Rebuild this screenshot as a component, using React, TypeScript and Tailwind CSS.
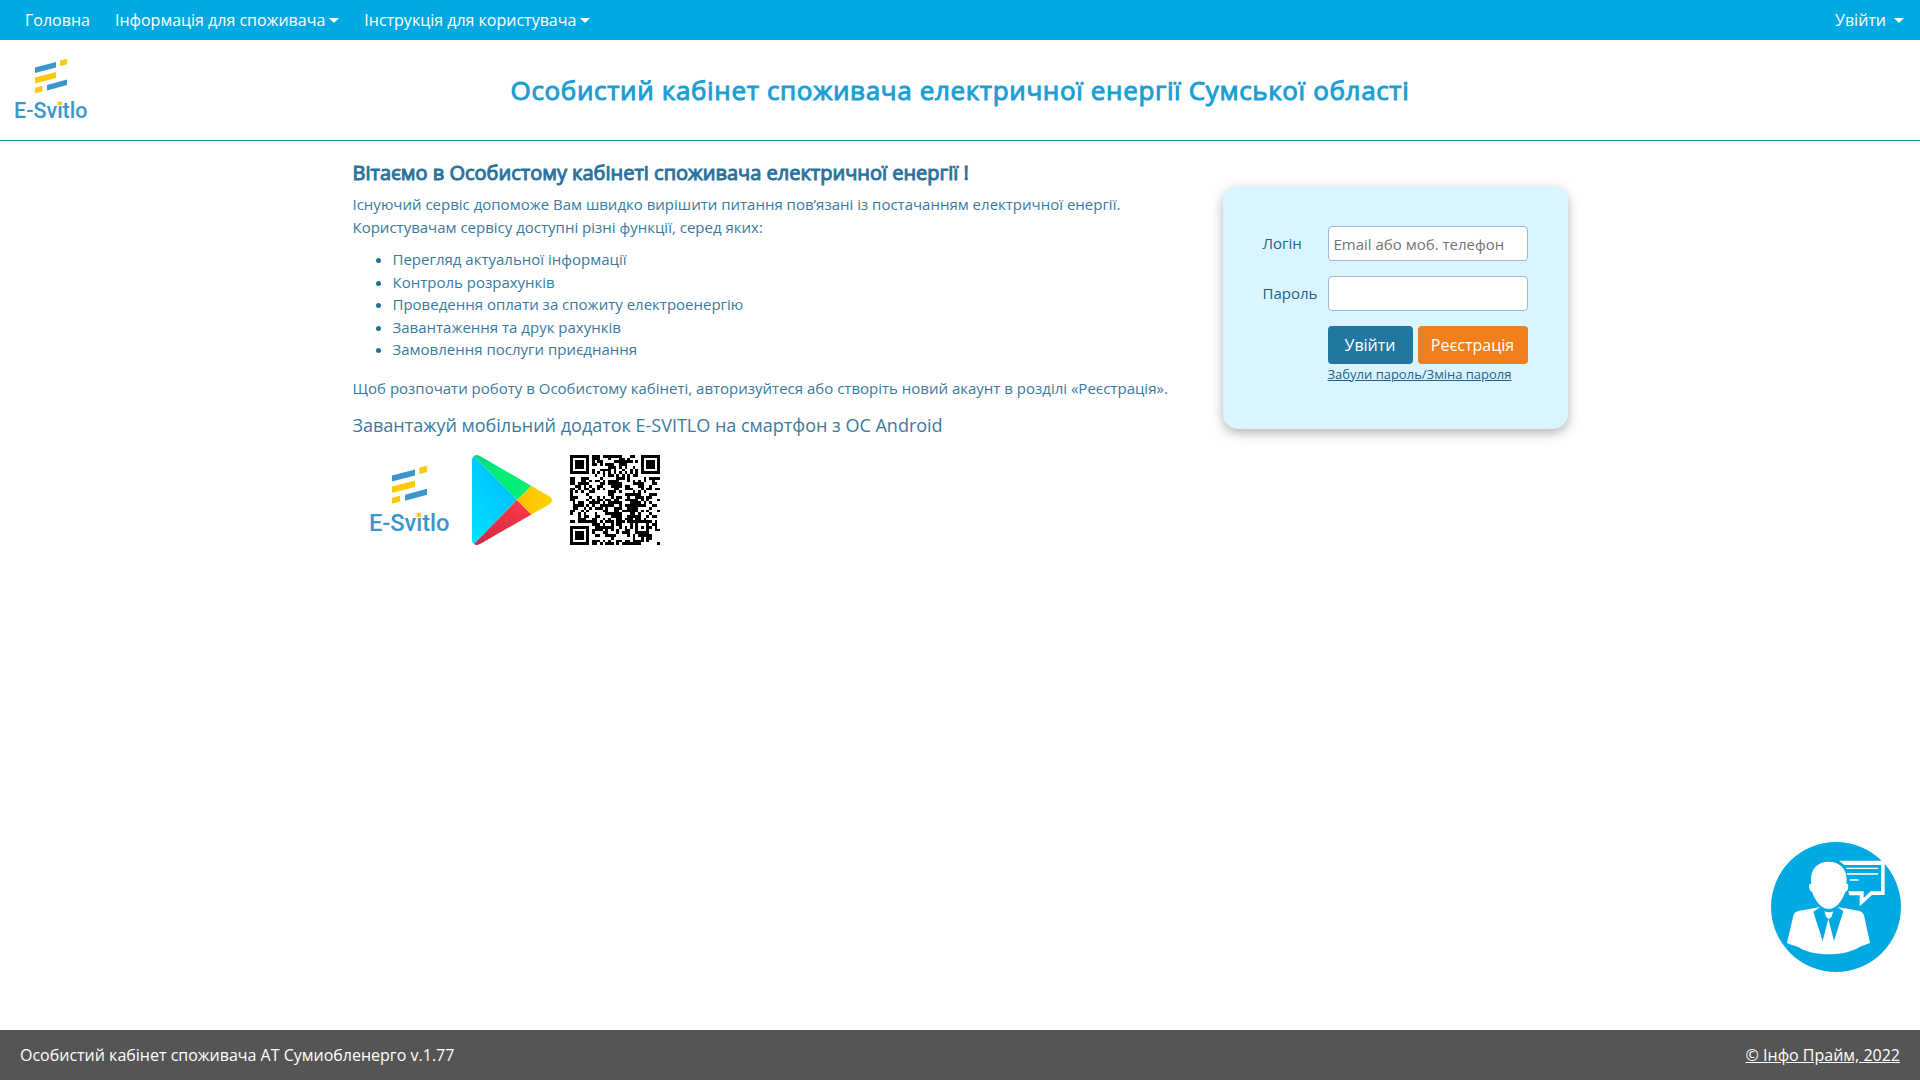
import type { ReactNode } from 'react';

const QR_SIZE = 33;
const QR_DATA_BYTES = 80;
const QR_EC_BYTES = 20;
const QR_MASK = 4;
const STORE_URL = 'https://play.google.com/store/apps/details?id=com.soe.superbill';

function reedSolomon(data: number[], n: number): number[] {
  const exp: number[] = [];
  const log: number[] = [];
  let x = 1;
  for (let i = 0; i < 255; i++) {
    exp[i] = x;
    log[x] = i;
    x <<= 1;
    if (x & 256) x ^= 0x11d;
  }
  const mul = (a: number, b: number) => (a && b ? exp[(log[a] + log[b]) % 255] : 0);
  let gen: number[] = [1];
  for (let i = 0; i < n; i++) {
    const next: number[] = new Array(gen.length + 1).fill(0);
    gen.forEach((g, j) => {
      next[j] ^= g;
      next[j + 1] ^= mul(g, exp[i]);
    });
    gen = next;
  }
  const rem: number[] = [...data, ...new Array(n).fill(0)];
  for (let i = 0; i < data.length; i++) {
    const f = rem[i];
    if (f) gen.forEach((g, j) => { rem[i + j] ^= mul(g, f); });
  }
  return rem.slice(data.length);
}

// Version 4 code, error correction level L, byte mode.
function buildQr(text: string): number[][] {
  const bits: number[] = [];
  const push = (v: number, n: number) => {
    for (let i = n - 1; i >= 0; i--) bits.push((v >> i) & 1);
  };
  push(4, 4);
  push(text.length, 8);
  for (const c of text) push(c.charCodeAt(0), 8);
  push(0, 4);
  const data: number[] = [];
  for (let i = 0; i < bits.length; i += 8) data.push(parseInt(bits.slice(i, i + 8).join(''), 2));
  for (let p = 0xec; data.length < QR_DATA_BYTES; p ^= 0xfd) data.push(p);
  const all = [...data, ...reedSolomon(data, QR_EC_BYTES)];

  const m: number[][] = Array.from({ length: QR_SIZE }, () => new Array(QR_SIZE).fill(-1));
  const rings = (r: number, c: number, radius: number, light: number[]) => {
    for (let y = -radius; y <= radius; y++) {
      for (let x = -radius; x <= radius; x++) {
        const d = Math.max(Math.abs(y), Math.abs(x));
        if (m[r + y] && c + x >= 0 && c + x < QR_SIZE) m[r + y][c + x] = light.includes(d) ? 0 : 1;
      }
    }
  };
  rings(3, 3, 4, [2, 4]);
  rings(3, QR_SIZE - 4, 4, [2, 4]);
  rings(QR_SIZE - 4, 3, 4, [2, 4]);
  rings(26, 26, 2, [1]);
  for (let i = 8; i < QR_SIZE - 8; i++) {
    m[6][i] = 1 - (i % 2);
    m[i][6] = 1 - (i % 2);
  }

  const format = (1 << 3) | QR_MASK;
  let rem = format;
  for (let i = 0; i < 10; i++) rem = (rem << 1) ^ ((rem >> 9) * 0x537);
  const f = ((format << 10) | rem) ^ 0x5412;
  const bit = (i: number) => (f >> i) & 1;
  for (let i = 0; i <= 5; i++) m[i][8] = bit(i);
  m[7][8] = bit(6);
  m[8][8] = bit(7);
  m[8][7] = bit(8);
  for (let i = 9; i < 15; i++) m[8][14 - i] = bit(i);
  for (let i = 0; i < 8; i++) m[8][QR_SIZE - 1 - i] = bit(i);
  for (let i = 8; i < 15; i++) m[QR_SIZE - 15 + i][8] = bit(i);
  m[QR_SIZE - 8][8] = 1;

  let k = 0;
  for (let right = QR_SIZE - 1; right >= 1; right -= 2) {
    if (right === 6) right = 5;
    for (let v = 0; v < QR_SIZE; v++) {
      for (let j = 0; j < 2; j++) {
        const c = right - j;
        const r = ((right + 1) & 2) === 0 ? QR_SIZE - 1 - v : v;
        if (m[r][c] !== -1) continue;
        const b = k < 800 ? (all[k >> 3] >> (7 - (k & 7))) & 1 : 0;
        k++;
        m[r][c] = b ^ ((Math.floor(r / 2) + Math.floor(c / 3)) % 2 === 0 ? 1 : 0);
      }
    }
  }
  return m;
}

const QR_PATH = buildQr(STORE_URL)
  .flatMap((row, y) => row.map((v, x) => (v ? `M${x} ${y}h1v1h-1z` : '')))
  .join('');

function QrCode() {
  return (
    <svg className="size-[90px]" viewBox={`0 0 ${QR_SIZE} ${QR_SIZE}`} role="img" aria-label="QR">
      <path d={QR_PATH} fill="#000" shapeRendering="crispEdges" />
    </svg>
  );
}

function Logo({ className }: { className: string }) {
  return (
    <svg className={className} viewBox="0 0 72 60" overflow="visible" role="img" aria-label="E-Svitlo">
      <path fill="#3a97cb" d="M20 9.500 41 4v5.500L20 15zM32 27l20-5.500V27l-20 5.500z" />
      <path fill="#fdc90f" d="M45 2.500 52 .7v5.600l-7 1.900zM20 19.500 41 14v6l-21 5.500zM20 29.800l7.500-2v5.500l-7.500 2z" />
      <text x="-1" y="60" fontFamily="Roboto, sans-serif" fontSize="21.500" fontWeight="500" fill="#3a97cb">
        E-Svitlo
      </text>
      <rect x="42.500" y="43.500" width="4" height="3.500" fill="#fdc90f" />
    </svg>
  );
}

function PlayLogo() {
  return (
    <svg className="h-[90px] w-[80px]" viewBox="0 0 80 90" role="img" aria-label="Google Play">
      <defs>
        <linearGradient id="playBlue" x1="1" y1="0" x2="0.2" y2="1">
          <stop offset="0" stopColor="#00b4ff" />
          <stop offset="1" stopColor="#00e0ff" />
        </linearGradient>
        <linearGradient id="playGreen" x1="0" y1="0" x2="1" y2="1">
          <stop offset="0" stopColor="#0fd080" />
          <stop offset="0.4" stopColor="#00ee76" />
        </linearGradient>
        <linearGradient id="playRed" x1="1" y1="0" x2="0" y2="1">
          <stop offset="0" stopColor="#ff3a44" />
          <stop offset="1" stopColor="#d0264c" />
        </linearGradient>
        <linearGradient id="playYellow" x1="0" y1="0" x2="1" y2="0">
          <stop offset="0" stopColor="#ffbf00" />
          <stop offset="1" stopColor="#ffd500" />
        </linearGradient>
      </defs>
      <path fill="url(#playBlue)" d="M2 1C.7 2 0 3.500 0 5.500v79C0 86.500.7 88 2 89l43-44z" />
      <path fill="url(#playGreen)" d="M2 1C3.500-.2 5.500-.2 8 1.100L59.500 31 45 45z" />
      <path fill="url(#playRed)" d="M2 89c1.500 1.200 3.500 1.200 6-.1L59.500 59.500 45 45z" />
      <path fill="url(#playYellow)" d="M59.500 31 76.500 40.700c4.500 2.600 4.500 6.500 0 9.100L59.500 59.500 45 45z" />
    </svg>
  );
}

function SupportIcon() {
  return (
    <svg className="size-[130px]" viewBox="93 66 390 390" aria-hidden="true">
      <circle cx="288" cy="261" r="195" fill="#00a9e2" />
      <path
        fill="#fff"
        d="M297 122h137v103h-38l-37 34v-33h-31l-3-12h46v20l21-20h31v-79H313zM317 143h97v4h-95zM321 159h93v5h-93zM329 178h27v4h-27z"
      />
      <path
        fill="#fff"
        d="M266 125c-33 0-54 22-53 55l1 12c-6-2-8 3-6 13 1 7 4 10 8 10 8 26 28 52 50 52s42-26 50-52c4 0 7-3 8-10 2-10 0-15-5-13l1-12c1-33-21-55-54-55z"
      />
      <path
        fill="#fff"
        d="M241 261 175 273c-8 2-12 6-15 14l-19 82c12 6 22 8 34 12 20 14 54 22 91 22s72-8 92-22l32-12-18-83c-3-8-8-12-16-14l-64-11 18 13-28 89-17-67-17 67-28-88z"
      />
      <path fill="#fff" d="M253 274c9 4 18 4 27 0l-6 18 -8 5-7-5z" />
    </svg>
  );
}

function Caret() {
  return <span className="mt-px h-0 w-0 border-x-5 border-t-5 border-x-transparent border-t-white" />;
}

function MenuButton({ children, className }: { children: ReactNode; className: string }) {
  return (
    <button type="button" className={`flex cursor-pointer items-center ${className}`}>
      {children}
      <Caret />
    </button>
  );
}

const features = [
  'Перегляд актуальної інформації',
  'Контроль розрахунків',
  'Проведення оплати за спожиту електроенергію',
  'Завантаження та друк рахунків',
  'Замовлення послуги приєднання',
];

const fieldClass =
  'h-[35px] w-full rounded border border-[#9db8dc] bg-white px-[5px] text-[15px] text-gray-700 placeholder:text-[#757575]';

export default function App() {
  return (
    <div className="flex min-h-screen flex-col bg-white font-['Open_Sans',sans-serif] text-base text-[#3a7a9f]">
      <nav className="flex h-10 items-center justify-between bg-[#00a9e2] pr-4 pl-[25px] text-white">
        <div className="flex items-center gap-[25px]">
          <a href="#home">Головна</a>
          <MenuButton className="gap-1">Інформація для споживача</MenuButton>
          <MenuButton className="gap-1">Інструкція для користувача</MenuButton>
        </div>
        <MenuButton className="gap-2">Увійти</MenuButton>
      </nav>

      <header className="grid h-[101px] grid-cols-[1fr_auto_1fr] items-center border-b border-[#2a93b8] px-[15px]">
        <a href="#home" className="w-[72px] pb-[5px]">
          <Logo className="h-[60px] w-[72px]" />
        </a>
        <h1 className="pt-px text-[26px] tracking-wide text-[#1a9fd4] [-webkit-text-stroke:1px]">
          Особистий кабінет споживача електричної енергії Сумської області
        </h1>
      </header>

      <main className="mx-auto flex w-full max-w-[1231px] flex-1 items-start justify-between px-2">
        <section className="pt-[17px] text-[15px] leading-normal">
          <h2 className="mb-[5px] text-xl leading-[30px] text-[#2b729c] [-webkit-text-stroke:1px]">
            Вітаємо в Особистому кабінеті споживача електричної енергії !
          </h2>
          <p className="mb-[10px]">
            Існуючий сервіс допоможе Вам швидко вирішити питання пов’язані із постачанням електричної енергії.
            <br />
            Користувачам сервісу доступні різні функції, серед яких:
          </p>
          <ul className="mb-4 list-disc pl-10 marker:text-[#25709a]">
            {features.map((f) => (
              <li key={f}>{f}</li>
            ))}
          </ul>
          <p className="mb-[13px]">
            Щоб розпочати роботу в Особистому кабінеті, авторизуйтеся або створіть новий акаунт в розділі «Реєстрація».
          </p>
          <p className="mb-4 text-lg leading-[27px]">Завантажуй мобільний додаток E-SVITLO на смартфон з ОС Android</p>
          <div className="flex items-center gap-[18px] pl-[17px]">
            <a href="#app" className="w-[84px] pb-[5px]">
              <Logo className="h-[66px] w-[79px]" />
            </a>
            <a href="#play">
              <PlayLogo />
            </a>
            <QrCode />
          </div>
        </section>

        <form
          className="mt-[45px] grid grid-cols-[65px_200px] items-center gap-y-[15px] rounded-[15px] bg-[#daf5ff] px-10 pt-10 pb-[45px] text-[#1c6288] shadow-[0_4px_12px_rgba(0,0,0,0.3)]"
          onSubmit={(e) => e.preventDefault()}
        >
          <label htmlFor="login" className="text-[15px]">
            Логін
          </label>
          <input id="login" type="text" placeholder="Email або моб. телефон" className={fieldClass} />
          <label htmlFor="password" className="text-[15px]">
            Пароль
          </label>
          <input id="password" type="password" className={fieldClass} />
          <div className="col-start-2">
            <div className="flex justify-between text-white">
              <button type="submit" className="h-[38px] w-[85px] cursor-pointer rounded bg-[#2277a0]">
                Увійти
              </button>
              <button type="button" className="h-[38px] w-[110px] cursor-pointer rounded bg-[#f07f1b]">
                Реєстрація
              </button>
            </div>
            <a href="#restore" className="block text-[13px] leading-5 whitespace-nowrap underline">
              Забули пароль/Зміна пароля
            </a>
          </div>
        </form>
      </main>

      <footer className="flex h-[50px] items-center justify-between bg-[#555] px-5 text-white">
        <p>Особистий кабінет споживача АТ Сумиобленерго v.1.77</p>
        <a href="#company" className="underline">
          © Інфо Прайм, 2022
        </a>
      </footer>

      <button type="button" aria-label="Чат підтримки" className="fixed right-[19px] bottom-[108px] cursor-pointer rounded-full">
        <SupportIcon />
      </button>
    </div>
  );
}
